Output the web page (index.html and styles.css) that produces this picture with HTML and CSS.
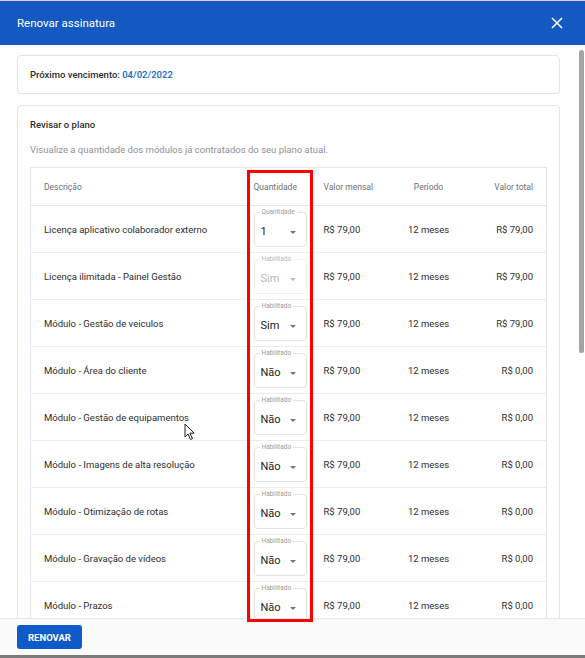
FILE: index.html
```html
<!DOCTYPE html>
<html lang="pt-BR">
<head>
   <meta charset="utf-8">
   <meta name="viewport" content="width=device-width, initial-scale=1">
   <title>Renovar assinatura</title>
   <link rel="stylesheet" href="styles.css">
</head>
<body>
    <div id="modal">
        <div id="modal_header">
            <h2 class="modal_title">Renovar assinatura</h2>
            <button id="close_modal" aria-label="Fechar">
                <svg width="12" height="12" viewBox="0 0 12 12"><path d="M1 1L11 11M11 1L1 11" stroke="#ffffff" stroke-width="1.6" fill="none"/></svg>
            </button>
        </div>
        <div id="modal_body">
            <div class="card due_card">
                <p class="due">Próximo vencimento: <span class="due_date">04/02/2022</span></p>
            </div>
            <div class="card plan_card">
                <h3 class="card_title">Revisar o plano</h3>
                <p class="card_subtitle">Visualize a quantidade dos módulos já contratados do seu plano atual.</p>
                <table id="plan_table">
                    <colgroup>
                        <col class="col_desc">
                        <col class="col_qty">
                        <col class="col_month">
                        <col class="col_period">
                        <col class="col_total">
                    </colgroup>
                    <thead>
                        <tr>
                            <th>Descrição</th>
                            <th class="qty">Quantidade</th>
                            <th>Valor mensal</th>
                            <th class="period">Período</th>
                            <th class="total">Valor total</th>
                        </tr>
                    </thead>
                    <tbody>
                        <tr>
                            <td>Licença aplicativo colaborador externo</td>
                            <td class="qty"><div class="select"><span class="select_label">Quantidade</span><span class="select_value">1</span><i class="caret"></i></div></td>
                            <td>R$ 79,00</td>
                            <td class="period">12 meses</td>
                            <td class="total">R$ 79,00</td>
                        </tr>
                        <tr>
                            <td>Licença ilimitada - Painel Gestão</td>
                            <td class="qty"><div class="select disabled"><span class="select_label">Habilitado</span><span class="select_value">Sim</span><i class="caret"></i></div></td>
                            <td>R$ 79,00</td>
                            <td class="period">12 meses</td>
                            <td class="total">R$ 79,00</td>
                        </tr>
                        <tr>
                            <td>Módulo - Gestão de veiculos</td>
                            <td class="qty"><div class="select"><span class="select_label">Habilitado</span><span class="select_value">Sim</span><i class="caret"></i></div></td>
                            <td>R$ 79,00</td>
                            <td class="period">12 meses</td>
                            <td class="total">R$ 79,00</td>
                        </tr>
                        <tr>
                            <td>Módulo - Área do cliente</td>
                            <td class="qty"><div class="select"><span class="select_label">Habilitado</span><span class="select_value">Não</span><i class="caret"></i></div></td>
                            <td>R$ 79,00</td>
                            <td class="period">12 meses</td>
                            <td class="total">R$ 0,00</td>
                        </tr>
                        <tr>
                            <td>Módulo - Gestão de equipamentos</td>
                            <td class="qty"><div class="select"><span class="select_label">Habilitado</span><span class="select_value">Não</span><i class="caret"></i></div></td>
                            <td>R$ 79,00</td>
                            <td class="period">12 meses</td>
                            <td class="total">R$ 0,00</td>
                        </tr>
                        <tr>
                            <td>Módulo - Imagens de alta resolução</td>
                            <td class="qty"><div class="select"><span class="select_label">Habilitado</span><span class="select_value">Não</span><i class="caret"></i></div></td>
                            <td>R$ 79,00</td>
                            <td class="period">12 meses</td>
                            <td class="total">R$ 0,00</td>
                        </tr>
                        <tr>
                            <td>Módulo - Otimização de rotas</td>
                            <td class="qty"><div class="select"><span class="select_label">Habilitado</span><span class="select_value">Não</span><i class="caret"></i></div></td>
                            <td>R$ 79,00</td>
                            <td class="period">12 meses</td>
                            <td class="total">R$ 0,00</td>
                        </tr>
                        <tr>
                            <td>Módulo - Gravação de vídeos</td>
                            <td class="qty"><div class="select"><span class="select_label">Habilitado</span><span class="select_value">Não</span><i class="caret"></i></div></td>
                            <td>R$ 79,00</td>
                            <td class="period">12 meses</td>
                            <td class="total">R$ 0,00</td>
                        </tr>
                        <tr>
                            <td>Módulo - Prazos</td>
                            <td class="qty"><div class="select"><span class="select_label">Habilitado</span><span class="select_value">Não</span><i class="caret"></i></div></td>
                            <td>R$ 79,00</td>
                            <td class="period">12 meses</td>
                            <td class="total">R$ 0,00</td>
                        </tr>
                    </tbody>
                </table>
            </div>
            <div id="scroll_thumb"></div>
        </div>
        <div id="modal_footer">
            <button id="renew">RENOVAR</button>
        </div>
    </div>
    <div id="highlight"></div>
    <svg id="cursor" width="12" height="18" viewBox="0 0 12 18"><path d="M1 1L1 14L4 11L6.5 16.5L8.5 15.6L6 10.2L10.2 10.2Z" fill="#ffffff" stroke="#222222" stroke-width="1" stroke-linejoin="round"/></svg>
</body>
</html>
```

FILE: styles.css
```css
body {
    margin: 0;
    overflow: hidden;
    background-color: #ffffff;
    font-family: Roboto, "Liberation Sans", sans-serif;
    color: #2b2d31;
}

#modal {
    display: flex;
    flex-direction: column;
    height: 658px;
    border-top: 1px solid #e9c6e6;
    border-bottom: 3px solid #7a7a7a;
    box-sizing: border-box;
}

#modal_header {
    display: flex;
    align-items: center;
    justify-content: space-between;
    height: 44px;
    padding: 0 17px;
    background-color: #1459c2;
    flex-shrink: 0;
}

.modal_title {
    margin: 0;
    color: #ffffff;
    font-size: 11.5px;
    font-weight: 400;
}

#close_modal {
    display: flex;
    background: none;
    border: none;
    padding: 0;
    margin-right: 5px;
    cursor: pointer;
}

#modal_body {
    position: relative;
    flex: 1;
    overflow: hidden;
    padding: 10px 25px 0 17px;
}

#scroll_thumb {
    position: absolute;
    right: 1px;
    top: 5px;
    width: 5px;
    height: 303px;
    border-radius: 3px;
    background-color: #a3a3a3;
}

.card {
    border: 1px solid #dfe5f0;
    border-radius: 4px;
    background-color: #ffffff;
}

.due_card {
    padding: 12px 12px;
    margin-bottom: 11px;
}

.due {
    margin: 0;
    font-size: 9.5px;
    font-weight: 500;
    line-height: 13px;
}

.due_date {
    color: #1565c8;
}

.plan_card {
    padding: 12px 12px 0 12px;
}

.card_title {
    margin: 0;
    font-size: 9.5px;
    font-weight: 500;
    line-height: 13px;
}

.card_subtitle {
    margin: 12px 0 11px 0;
    font-size: 9.5px;
    line-height: 13px;
    color: #8d9199;
}

#plan_table {
    width: 100%;
    table-layout: fixed;
    border-collapse: collapse;
    border: 1px solid #e1e6f0;
    font-size: 9.5px;
}

.col_desc { width: 217px; }
.col_qty { width: 76px; }
.col_month { width: 66px; }
.col_period { width: 78px; }

#plan_table th {
    height: 37px;
    padding: 0;
    font-weight: 400;
    font-size: 8.5px;
    color: #6c7078;
    text-align: left;
    border-bottom: 1px solid #e1e6f0;
}

#plan_table td {
    height: 46px;
    padding: 0;
    border-bottom: 1px solid #e8ecf3;
    white-space: nowrap;
}

#plan_table th:first-child, #plan_table td:first-child {
    padding-left: 13px;
}

#plan_table .qty {
    padding-left: 6px;
}

#plan_table .period {
    text-align: center;
}

#plan_table .total {
    text-align: right;
    padding-right: 13px;
}

.select {
    position: relative;
    display: flex;
    align-items: center;
    width: 53px;
    height: 35px;
    box-sizing: border-box;
    border: 1px solid #e3e3e3;
    border-radius: 4px;
    padding: 4px 0 0 6px;
}

.select_label {
    position: absolute;
    top: -5px;
    left: 5px;
    padding: 0 2px;
    background-color: #ffffff;
    font-size: 6.5px;
    line-height: 9px;
    color: #9a9a9a;
}

.select_value {
    font-size: 11px;
    color: #222222;
}

.caret {
    position: absolute;
    right: 10px;
    top: 18px;
    border-left: 3.5px solid transparent;
    border-right: 3.5px solid transparent;
    border-top: 3.5px solid #757575;
}

.disabled {
    border-color: #eeeeee;
}

.disabled .select_label, .disabled .select_value {
    color: #b8b8b8;
}

.disabled .caret {
    border-top-color: #b8b8b8;
}

#modal_footer {
    flex-shrink: 0;
    height: 36px;
    padding: 0 17px;
    display: flex;
    align-items: center;
    background-color: #fafafa;
    border-top: 1px solid #e4e8ef;
}

#renew {
    background-color: #0d5ac8;
    border: none;
    color: #ffffff;
    font-family: Roboto, "Liberation Sans", sans-serif;
    font-size: 9.5px;
    font-weight: 700;
    padding: 0;
    width: 65px;
    height: 24px;
    border-radius: 3px;
    cursor: pointer;
}

#highlight {
    position: absolute;
    left: 247px;
    top: 170px;
    width: 66px;
    height: 452px;
    box-sizing: border-box;
    border: 3px solid #ff0000;
}

#cursor {
    position: absolute;
    left: 184px;
    top: 423px;
}
```
